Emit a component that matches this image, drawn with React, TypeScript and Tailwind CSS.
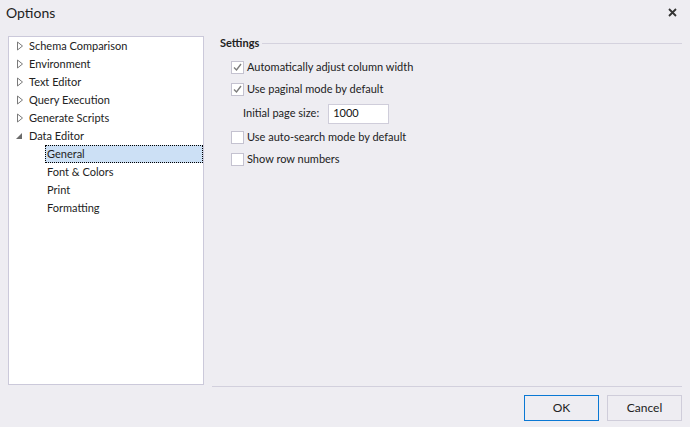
import React from "react";

type TreeItem = { label: string; level: 0 | 1; state?: "collapsed" | "expanded"; selected?: boolean };

const TREE: TreeItem[] = [
  { label: "Schema Comparison", level: 0, state: "collapsed" },
  { label: "Environment", level: 0, state: "collapsed" },
  { label: "Text Editor", level: 0, state: "collapsed" },
  { label: "Query Execution", level: 0, state: "collapsed" },
  { label: "Generate Scripts", level: 0, state: "collapsed" },
  { label: "Data Editor", level: 0, state: "expanded" },
  { label: "General", level: 1, selected: true },
  { label: "Font & Colors", level: 1 },
  { label: "Print", level: 1 },
  { label: "Formatting", level: 1 },
];

function Arrow({ state }: { state?: "collapsed" | "expanded" }) {
  if (state === "expanded") {
    return (
      <svg width="8" height="8" viewBox="0 0 8 8" className="block">
        <polygon points="6,1 6,7 0,7" fill="#6b6b6b" />
      </svg>
    );
  }
  return (
    <svg width="8" height="10" viewBox="0 0 8 10" className="block">
      <polygon points="1.5,1 6.5,5 1.5,9" fill="none" stroke="#7a7a7a" strokeWidth="1" />
    </svg>
  );
}

function Checkbox({ checked, label }: { checked: boolean; label: string }) {
  return (
    <div className="flex h-[22px] items-center">
      <span className="flex h-[13px] w-[13px] items-center justify-center border border-[#c4c2d0] bg-white">
        {checked && (
          <svg width="11" height="11" viewBox="0 0 11 11">
            <polyline points="2,5.5 4.5,8 9,2" fill="none" stroke="#7d7d7d" strokeWidth="1.4" />
          </svg>
        )}
      </span>
      <span className="ml-[3px] text-[#222]">{label}</span>
    </div>
  );
}

export default function App() {
  return (
    <div
      className="flex h-[427px] w-[690px] flex-col bg-[#eeedf2] text-[11px] text-[#1e1e1e]"
      style={{ fontFamily: 'Lato, "Noto Sans", sans-serif' }}
    >
      <div className="flex h-[25px] items-center justify-between pl-[6px] pr-[13px]">
        <span className="text-[14px] text-[#222]">Options</span>
        <svg width="9" height="9" viewBox="0 0 9 9">
          <path d="M1 1 L8 8 M8 1 L1 8" stroke="#333" strokeWidth="1.8" />
        </svg>
      </div>

      <div className="flex flex-1 pl-[8px] pr-[8px] pt-[11px]">
        <div className="h-[349px] w-[196px] border border-[#cbc9da] bg-white">
          {TREE.map((item) => (
            <div key={item.label} className="flex h-[18px] items-center">
              {item.level === 0 ? (
                <>
                  <span className="flex w-[20px] justify-end pr-[5px]">
                    <Arrow state={item.state} />
                  </span>
                  <span className="text-[#222]">{item.label}</span>
                </>
              ) : (
                <span
                  className={
                    item.selected
                      ? "ml-[36px] flex h-[18px] flex-1 items-center border border-dotted border-black bg-[#cce0f5] pl-px"
                      : "ml-[38px] flex h-[18px] flex-1 items-center"
                  }
                >
                  {item.label}
                </span>
              )}
            </div>
          ))}
        </div>

        <div className="ml-[8px] flex flex-1 flex-col">
          <div className="-mt-[1px] flex items-center pl-[8px]">
            <span className="font-bold text-[#222]">Settings</span>
            <span className="ml-[3px] h-px flex-1 bg-[#d4d2de]" />
          </div>
          <div className="pl-[19px] pt-[5px]">
            <Checkbox checked label="Automatically adjust column width" />
            <Checkbox checked label="Use paginal mode by default" />
            <div className="flex h-[26px] items-center pl-[12px]">
              <span className="text-[#222]">Initial page size:</span>
              <span className="ml-[9px] flex h-[20px] w-[61px] items-center border border-[#cfcdda] bg-white pl-[4px] text-[#111]">
                1000
              </span>
            </div>
            <Checkbox checked={false} label="Use auto-search mode by default" />
            <Checkbox checked={false} label="Show row numbers" />
          </div>
          <div className="flex-1" />
          <div className="mb-[8px] h-px bg-[#d2d0dd]" />
          <div className="flex justify-end gap-[8px] pb-[6px]">
            <button className="h-[26px] w-[75px] border border-[#0a78d4] bg-[#eeedf2] text-[12px] text-[#222]">
              OK
            </button>
            <button className="h-[26px] w-[75px] border border-[#cfcdda] bg-[#eeedf2] text-[12px] text-[#222]">
              Cancel
            </button>
          </div>
        </div>
      </div>
    </div>
  );
}
